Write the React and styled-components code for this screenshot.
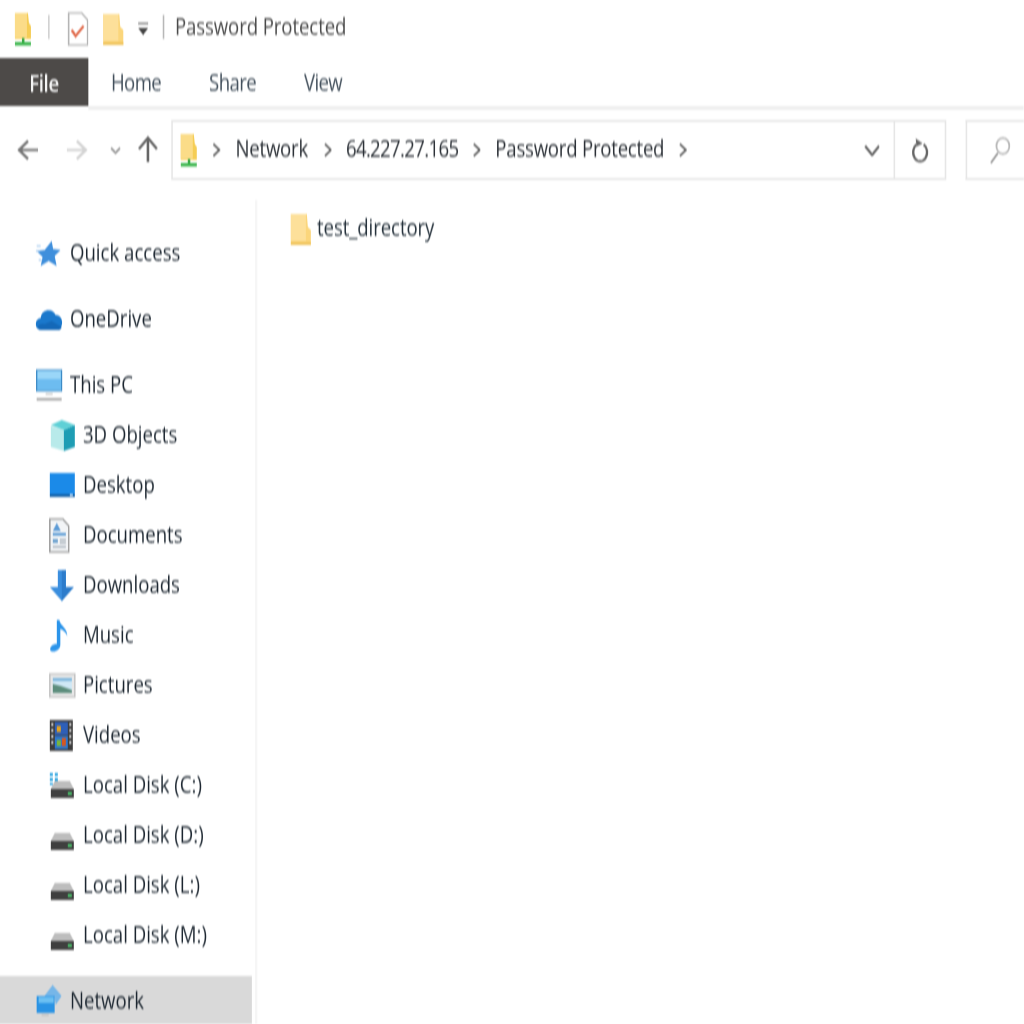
import React from "react";
import styled, { createGlobalStyle } from "styled-components";

const SX = 0.775;
const X = (n) => `${n / SX}px`;

const Global = createGlobalStyle`
  html, body { margin: 0; padding: 0; background: #fff; overflow: hidden; }
  #root { width: 1024px; height: 1024px; overflow: hidden; }
`;

const Stage = styled.div`
  width: ${1024 / SX}px;
  height: 1024px;
  overflow: hidden;
  background: #fff;
  transform: scaleX(${SX});
  transform-origin: 0 0;
  filter: blur(0.9px);
  font-family: "Open Sans", "Noto Sans", sans-serif;
  font-size: 24px;
  color: #1c2630;
  display: flex;
  flex-direction: column;
`;

const TitleBar = styled.div`
  height: 58px;
  display: flex;
  align-items: center;
  padding-left: ${X(14)};
  flex: none;
`;
const TitleSep = styled.div`
  width: ${X(1.5)};
  height: 24px;
  background: ${(p) => p.$c || "#d0d0d0"};
  margin: -4px ${(p) => X(p.$r)} 0 ${(p) => X(p.$l)};
`;
const TitleText = styled.span`
  color: #4a4a4a;
  margin-top: -8px;
  white-space: nowrap;
  letter-spacing: -0.12px;
`;
const TabBar = styled.div`
  height: 48px;
  display: flex;
  align-items: stretch;
  flex: none;
`;
const FileTab = styled.div`
  width: ${X(88)};
  background: #4d4a48;
  color: #f4f4f4;
  display: flex;
  align-items: center;
  justify-content: center;
  font-weight: 600;
  letter-spacing: -0.5px;
`;
const Tab = styled.div`
  color: #43505c;
  display: flex;
  align-items: center;
  margin-left: ${(p) => X(p.$l)};
  margin-top: -2px;
  white-space: nowrap;
  letter-spacing: -0.8px;
`;
const RibbonLine = styled.div`
  height: 4px;
  background: #efefef;
  margin-left: ${X(88)};
  flex: none;
`;
const NavRow = styled.div`
  height: 60px;
  margin-top: 10px;
  display: flex;
  align-items: center;
  flex: none;
`;
const NavButtons = styled.div`
  width: ${X(171)};
  height: 100%;
  flex: none;
  display: flex;
  align-items: center;
  padding-left: ${X(17)};
  box-sizing: border-box;
`;
const Gap = styled.div`
  width: ${(p) => X(p.$w)};
  flex: none;
`;
const AddressBox = styled.div`
  width: ${X(775)};
  height: 100%;
  box-sizing: border-box;
  border: 2px solid #e6e6e6;
  display: flex;
  align-items: center;
  padding-left: ${X(7)};
  flex: none;
`;
const Crumb = styled.span`
  color: #2c3137;
  white-space: nowrap;
  margin-top: -6px;
  letter-spacing: ${(p) => (p.$tight ? "-0.85px" : "-0.3px")};
`;
const Spring = styled.div`
  flex: 1;
`;
const RefreshCell = styled.div`
  width: ${X(49)};
  height: 100%;
  border-left: 2px solid #e6e6e6;
  display: flex;
  align-items: center;
  justify-content: center;
  flex: none;
`;
const SearchBox = styled.div`
  width: ${X(70)};
  height: 100%;
  margin-left: ${X(20)};
  box-sizing: border-box;
  border: 2px solid #e6e6e6;
  border-right: none;
  display: flex;
  align-items: center;
  padding-left: ${X(21)};
  flex: none;
`;
const Body = styled.div`
  flex: 1;
  min-height: 0;
  margin-top: 10px;
  display: flex;
`;
const Sidebar = styled.nav`
  width: ${X(252)};
  padding-top: 38px;
  flex: none;
`;
const SideRow = styled.div`
  height: 50px;
  margin-top: ${(p) => (p.$group ? "16px" : "0")};
  padding-left: ${(p) => X(p.$indent ? 49 : 36)};
  background: ${(p) => (p.$active ? "#d9d9d9" : "transparent")};
  display: flex;
  align-items: center;
  white-space: nowrap;
  box-sizing: border-box;
`;
const IconSlot = styled.div`
  width: ${X(34)};
  display: flex;
  align-items: center;
  flex: none;
`;
const RowText = styled.span`
  margin-top: -3px;
`;
const Divider = styled.div`
  width: ${X(2)};
  margin-left: ${X(3)};
  margin-top: 10px;
  background: #f6f6f6;
  flex: none;
`;
const Content = styled.main`
  flex: 1;
  padding: 22px 0 0 ${X(33)};
`;
const FileItem = styled.div`
  display: flex;
  align-items: center;
  height: 34px;
  white-space: nowrap;
`;
const FileName = styled.span`
  margin-left: ${X(5)};
  margin-top: -5px;
  color: #26323c;
  letter-spacing: -0.1px;
`;

const Ico = ({ w, h, children, style }) => (
  <svg width={w / SX} height={h} viewBox={`0 0 ${w} ${h}`} preserveAspectRatio="none" style={{ flex: "none", ...style }}>
    {children}
  </svg>
);

const Folder = () => (
  <Ico w={22} h={33}>
    <path d="M1 1h16l1 13 3 3v15H1z" fill="#fbd67c" />
    <path d="M1 1h15v27H1z" fill="#fde09a" />
    <path d="M1 29h20v3H1z" fill="#f0c45c" />
  </Ico>
);
const NetFolder = ({ w = 18, h = 34 }) => (
  <Ico w={w} h={h}>
    <path d="M1 1h13l1 10 2 3v13H1z" fill="#f5cd55" />
    <path d="M1 1h12v25H1z" fill="#fbdc88" />
    <path d="M8 26h2.500v4H8z" fill="#39a845" />
    <path d="M1 30h16v3.500H1z" fill="#39b54a" />
  </Ico>
);
const Doc = () => (
  <Ico w={22} h={34}>
    <path d="M2 1h13l6 7v25H2z" fill="#fff" stroke="#b5b5b5" strokeWidth="1.600" />
    <path d="M5 18l4 6 8-10" fill="none" stroke="#e0694a" strokeWidth="2.400" />
  </Ico>
);
const Drop = () => (
  <Ico w={12} h={14}>
    <path d="M1 1.500h10" stroke="#666" strokeWidth="1.600" />
    <path d="M1 6h10l-5 7z" fill="#444" />
  </Ico>
);
const Arrow = ({ w = 22, h = 22, c = "#777", dir = "left", sw = 2.6 }) => {
  const d = {
    left: "M21 11H2M11 2 2 11l9 9",
    right: "M1 11h19M11 2l9 9-9 9",
    up: "M10 26V2M1 13 10 2l9 11",
  }[dir];
  return (
    <Ico w={w} h={h}>
      <path d={d} fill="none" stroke={c} strokeWidth={sw} />
    </Ico>
  );
};
const Chev = ({ w = 8, h = 14, c = "#666" }) => (
  <Ico w={w} h={h}>
    <path d={`M1 1l${w - 2} ${h / 2 - 1}L1 ${h - 1}`} fill="none" stroke={c} strokeWidth="2" />
  </Ico>
);
const ChevDown = ({ w = 16, h = 11, c = "#666", sw = 2.4 }) => (
  <Ico w={w} h={h}>
    <path d={`M1 1l${w / 2 - 1} ${h - 2} ${w / 2 - 1}-${h - 2}`} fill="none" stroke={c} strokeWidth={sw} />
  </Ico>
);
const Refresh = () => (
  <Ico w={18} h={26}>
    <path d="M6 7.500A7 9 0 1 0 13 7.500" fill="none" stroke="#666" strokeWidth="2.400" />
    <path d="M5 1.500l7 5-6 3z" fill="#666" />
  </Ico>
);
const Search = () => (
  <Ico w={22} h={28}>
    <ellipse cx="14" cy="10" rx="6.500" ry="8" fill="none" stroke="#b9b9b9" strokeWidth="1.800" />
    <path d="M9 17 2 27" stroke="#999" strokeWidth="2" />
  </Ico>
);
const Star = () => (
  <Ico w={25} h={27}>
    <path d="M16 1l1.500 8 7.500 1-6 6 2 10-8-5-8 5 2-9-6-6 8-1z" fill="#3f8fdc" />
    <path d="M1 6h4M0 11h4M3 20h3" stroke="#a9cdf0" strokeWidth="1.500" />
  </Ico>
);
const Cloud = () => (
  <Ico w={27} h={24}>
    <path d="M6 23a5.500 6 0 0 1-1-12 8 9 0 0 1 15-3 6 7.500 0 0 1 1 15z" fill="#1a78cc" />
    <path d="M6 23a5 3 0 0 1 3-6l7-3 10 6a4 3 0 0 1-5 3z" fill="#1468b8" />
  </Ico>
);
const Monitor = () => (
  <Ico w={27} h={33}>
    <path d="M1 1h25v21H1z" fill="#6dbcf0" stroke="#3a88c4" strokeWidth="1.200" />
    <path d="M2 2h23v8H2z" fill="#9ad6f8" />
    <path d="M10 24h7v2h-7z" fill="#d0d0d0" />
    <path d="M1 29h25v2.500H1z" fill="#a7a7a7" />
  </Ico>
);
const Cube = () => (
  <Ico w={27} h={33}>
    <path d="M2 7l13 4v21L2 28z" fill="#b8eaea" />
    <path d="M15 11l11-5v22l-11 4z" fill="#1e9db4" />
    <path d="M2 6l11-5 13 5-11 5z" fill="#5fd0d6" />
  </Ico>
);
const DesktopIco = () => (
  <Ico w={27} h={26}>
    <path d="M1 1h25v21H1z" fill="#1b8ae8" />
    <path d="M1 22h25v3H1z" fill="#1361a8" />
    <path d="M21 22h3v2h-3z" fill="#cfe3f6" />
  </Ico>
);
const Documents = () => (
  <Ico w={21} h={35}>
    <path d="M1 1h13l6 7v26H1z" fill="#f2f4f6" stroke="#9a9a9a" strokeWidth="1.500" />
    <path d="M8 5l4 8H4z" fill="#5c9bd6" />
    <path d="M4 15h13v2.500H4z" fill="#4d93d2" />
    <path d="M4 21h5v4H4z" fill="#6fa3cf" />
    <path d="M11 21h6v1.500h-6zM11 24h6v1.500h-6zM4 28h13v1.500H4z" fill="#9aa6b0" />
  </Ico>
);
const DownloadIco = () => (
  <Ico w={26} h={33}>
    <path d="M9 1h8v17h8L13 32 1 18h8z" fill="#3a8ede" />
    <path d="M13 1h4v17h8L13 32z" fill="#2d7ccb" />
  </Ico>
);
const MusicIco = () => (
  <Ico w={20} h={33}>
    <path d="M8 1h2.500c1 6 8 8 8 16-1-3-4-6-7-7v16c0 4-4 6.500-7 6.500S1 31 1.500 29 5 24.500 8 25z" fill="#2b94ea" />
  </Ico>
);
const PicturesIco = () => (
  <Ico w={27} h={25}>
    <path d="M1 1h25v23H1z" fill="#e7e7e7" stroke="#c2c2c2" strokeWidth="1.500" />
    <path d="M4 5h19v15H4z" fill="#cfe8f6" />
    <path d="M4 11l8 2 11 4v3H4z" fill="#5c8d7c" />
    <path d="M4 5h19v3H4z" fill="#7eb6dc" />
  </Ico>
);
const VideosIco = () => (
  <Ico w={25} h={33}>
    <path d="M1 1h23v31H1z" fill="#3d3d3d" />
    <path d="M6 3h13v13H6z" fill="#2e5fb8" />
    <path d="M6 17h13v13H6z" fill="#2d77cf" />
    <path d="M8 7h4v6H8z" fill="#e6a41f" />
    <path d="M13 19h4v8h-4z" fill="#d6571f" />
    <path d="M8 21h4v6H8z" fill="#79b63a" />
    <path d="M2.500 4h2v3h-2zM2.500 10h2v3h-2zM2.500 16h2v3h-2zM2.500 22h2v3h-2zM20.500 4h2v3h-2zM20.500 10h2v3h-2zM20.500 16h2v3h-2zM20.500 22h2v3h-2z" fill="#cfcfcf" />
  </Ico>
);
const Disk = ({ win }) => (
  <Ico w={26} h={win ? 27 : 24} style={{ marginTop: win ? 0 : 8 }}>
    <g transform={win ? "translate(0 3)" : "translate(0 0)"}>
      {win && (
        <path d="M1-2h3v3H1zM6-2h3v3H6zM1 3h3v3H1zM6 3h3v3H6zM1 8h3v2H1z" fill="#2aa3e0" />
      )}
      <path d="M6 6h15l4 8H2z" fill="#bdbdbd" />
      <path d="M2 14h23v9H2z" fill="#3f3f3f" />
      <path d="M19 17h4v3h-4z" fill="#4ac06a" />
    </g>
  </Ico>
);
const NetworkIco = () => (
  <Ico w={27} h={34}>
    <path d="M8 13l9-12 9 11-6 9-1-8z" fill="#76b6e8" />
    <path d="M1 12h18v17H1z" fill="#2a93e4" />
    <path d="M3 13h15v6H3z" fill="#6cc0f2" />
    <path d="M6 30h7v2H6z" fill="#c4c4c4" />
  </Ico>
);

const rows = [
  { t: "Quick access", i: <Star /> },
  { t: "OneDrive", i: <Cloud />, group: true },
  { t: "This PC", i: <Monitor />, group: true },
  { t: "3D Objects", i: <Cube />, indent: true },
  { t: "Desktop", i: <DesktopIco />, indent: true },
  { t: "Documents", i: <Documents />, indent: true },
  { t: "Downloads", i: <DownloadIco />, indent: true },
  { t: "Music", i: <MusicIco />, indent: true },
  { t: "Pictures", i: <PicturesIco />, indent: true },
  { t: "Videos", i: <VideosIco />, indent: true },
  { t: "Local Disk (C:)", i: <Disk win />, indent: true },
  { t: "Local Disk (D:)", i: <Disk />, indent: true },
  { t: "Local Disk (L:)", i: <Disk />, indent: true },
  { t: "Local Disk (M:)", i: <Disk />, indent: true },
  { t: "Network", i: <NetworkIco />, group: true, active: true },
];

export default function App() {
  return (
    <>
      <Global />
      <Stage>
        <TitleBar>
          <NetFolder />
          <TitleSep $l={16} $r={17} />
          <Doc />
          <Gap $w={14} />
          <Folder />
          <Gap $w={13} />
          <Drop />
          <TitleSep $l={13} $r={11} $c="#b8b8b8" />
          <TitleText>Password Protected</TitleText>
        </TitleBar>
        <TabBar>
          <FileTab>File</FileTab>
          <Tab $l={23}>Home</Tab>
          <Tab $l={48}>Share</Tab>
          <Tab $l={48}>View</Tab>
        </TabBar>
        <RibbonLine />
        <NavRow>
          <NavButtons>
            <Arrow />
            <Gap $w={27} />
            <Arrow dir="right" c="#d4d4d4" />
            <Gap $w={22} />
            <ChevDown w={11} h={7} c="#999" sw={2} />
            <Gap $w={17} />
            <Arrow dir="up" w={20} h={28} c="#666" />
          </NavButtons>
          <AddressBox>
            <NetFolder />
            <Gap $w={15} />
            <Chev />
            <Gap $w={15} />
            <Crumb>Network</Crumb>
            <Gap $w={16} />
            <Chev />
            <Gap $w={14} />
            <Crumb $tight>64.227.27.165</Crumb>
            <Gap $w={14} />
            <Chev />
            <Gap $w={15} />
            <Crumb>Password Protected</Crumb>
            <Gap $w={15} />
            <Chev />
            <Spring />
            <ChevDown />
            <Gap $w={14} />
            <RefreshCell>
              <Refresh />
            </RefreshCell>
          </AddressBox>
          <SearchBox>
            <Search />
          </SearchBox>
        </NavRow>
        <Body>
          <Sidebar>
            {rows.map((r) => (
              <SideRow key={r.t} $group={r.group} $indent={r.indent} $active={r.active}>
                <IconSlot>{r.i}</IconSlot>
                <RowText>{r.t}</RowText>
              </SideRow>
            ))}
          </Sidebar>
          <Divider />
          <Content>
            <FileItem>
              <Folder />
              <FileName>test_directory</FileName>
            </FileItem>
          </Content>
        </Body>
      </Stage>
    </>
  );
}
